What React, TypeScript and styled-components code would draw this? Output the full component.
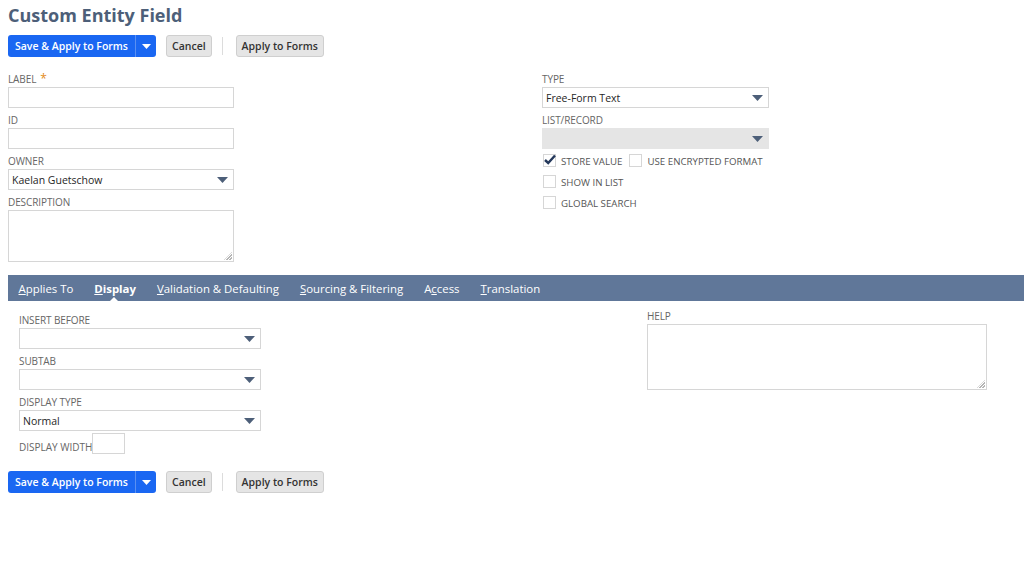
import React from 'react';
import styled, { createGlobalStyle } from 'styled-components';

const GlobalStyle = createGlobalStyle`
  html, body {
    margin: 0;
    padding: 0;
    background: #ffffff;
  }
  body {
    font-family: "Open Sans", "Liberation Sans", Arial, sans-serif;
    color: #333;
  }
`;

interface FieldProps {
  label: string;
  required?: boolean;
  children: React.ReactNode;
}

const Field: React.FC<FieldProps> = ({ label, required, children }) => (
  <FieldBlock>
    <FieldLabel>
      {label}
      {required && <Star>*</Star>}
    </FieldLabel>
    {children}
  </FieldBlock>
);

const Caret = () => (
  <svg width="11" height="6" viewBox="0 0 11 6">
    <path d="M0 0 L11 0 L5.5 6 Z" fill="#4d5f79" />
  </svg>
);

const SelectBox: React.FC<{ value?: string; width: number; disabled?: boolean }> = ({
  value,
  width,
  disabled,
}) => (
  <Select width={width} disabled={disabled}>
    <span>{value}</span>
    <Caret />
  </Select>
);

const CheckItem: React.FC<{ label: string; checked?: boolean }> = ({ label, checked }) => (
  <CheckLabel>
    <Box>
      {checked && (
        <svg width="12" height="11" viewBox="0 0 12 11">
          <path d="M1 6 L4.2 9 L11 1.5" stroke="#24385b" strokeWidth="2.4" fill="none" />
        </svg>
      )}
    </Box>
    {label}
  </CheckLabel>
);

const Actions = () => (
  <ButtonRow>
    <SplitButton>
      <PrimaryButton>Save &amp; Apply to Forms</PrimaryButton>
      <ArrowButton>
        <svg width="9" height="5" viewBox="0 0 9 5">
          <path d="M0 0 L9 0 L4.5 5 Z" fill="#ffffff" />
        </svg>
      </ArrowButton>
    </SplitButton>
    <GrayButton>Cancel</GrayButton>
    <Divider />
    <GrayButton>Apply to Forms</GrayButton>
  </ButtonRow>
);

const tabs = [
  { pre: '', key: 'A', post: 'pplies To' },
  { pre: '', key: 'D', post: 'isplay', active: true },
  { pre: '', key: 'V', post: 'alidation & Defaulting' },
  { pre: '', key: 'S', post: 'ourcing & Filtering' },
  { pre: 'A', key: 'c', post: 'cess' },
  { pre: '', key: 'T', post: 'ranslation' },
];

const App: React.FC = () => (
  <>
    <GlobalStyle />
    <Page>
      <Title>Custom Entity Field</Title>
      <Actions />

      <MainForm>
        <Column>
          <Field label="LABEL" required>
            <TextInput width={226} />
          </Field>
          <Field label="ID">
            <TextInput width={226} />
          </Field>
          <Field label="OWNER">
            <SelectBox value="Kaelan Guetschow" width={226} />
          </Field>
          <Field label="DESCRIPTION">
            <TextArea width={226} height={52}>
              <Grip />
            </TextArea>
          </Field>
        </Column>
        <Column>
          <Field label="TYPE">
            <SelectBox value="Free-Form Text" width={227} />
          </Field>
          <Field label="LIST/RECORD">
            <SelectBox width={227} disabled />
          </Field>
          <Checks>
            <CheckRow>
              <CheckItem label="STORE VALUE" checked />
              <CheckItem label="USE ENCRYPTED FORMAT" />
            </CheckRow>
            <CheckItem label="SHOW IN LIST" />
            <CheckItem label="GLOBAL SEARCH" />
          </Checks>
        </Column>
      </MainForm>

      <TabBar>
        {tabs.map((t) => (
          <Tab key={t.key + t.post} active={t.active}>
            {t.pre}
            <u>{t.key}</u>
            {t.post}
            {t.active && <Notch />}
          </Tab>
        ))}
      </TabBar>

      <TabBody>
        <Column>
          <Field label="INSERT BEFORE">
            <SelectBox width={242} />
          </Field>
          <Field label="SUBTAB">
            <SelectBox width={242} />
          </Field>
          <Field label="DISPLAY TYPE">
            <SelectBox value="Normal" width={242} />
          </Field>
          <InlineField>
            <InlineLabel>DISPLAY WIDTH</InlineLabel>
            <TextInput width={33} />
          </InlineField>
        </Column>
        <HelpColumn>
          <FieldLabel>HELP</FieldLabel>
          <TextArea width={340} height={66}>
            <Grip />
          </TextArea>
        </HelpColumn>
      </TabBody>

      <BottomActions>
        <Actions />
      </BottomActions>
    </Page>
  </>
);

export default App;

const Page = styled.div`
  padding: 2px 0 0 8px;
`;

const Title = styled.h1`
  margin: 0;
  font-size: 18px;
  line-height: 26px;
  font-weight: 700;
  color: #4d5f79;
`;

const ButtonRow = styled.div`
  display: flex;
  align-items: center;
  height: 22px;
  margin-top: 7px;
`;

const SplitButton = styled.div`
  display: flex;
  height: 22px;
  border-radius: 3px;
  overflow: hidden;
  background: #1a67f2;
  margin-right: 10px;
`;

const PrimaryButton = styled.button`
  border: none;
  background: transparent;
  color: #fff;
  font-family: inherit;
  font-size: 10.5px;
  font-weight: 600;
  padding: 0;
  width: 127px;
  height: 22px;
  white-space: nowrap;
`;

const ArrowButton = styled.span`
  width: 20px;
  display: flex;
  align-items: center;
  justify-content: center;
  border-left: 1px solid #5a90f2;
`;

const GrayButton = styled.button`
  height: 22px;
  border: 1px solid #cfcfcf;
  border-radius: 3px;
  background: #e5e5e5;
  color: #333;
  font-family: inherit;
  font-size: 10.5px;
  font-weight: 600;
  padding: 0 5px;
  white-space: nowrap;
`;

const Divider = styled.span`
  width: 1px;
  height: 18px;
  background: #dcdcdc;
  margin: 0 13px 0 10px;
`;

const MainForm = styled.div`
  display: grid;
  grid-template-columns: 534px 1fr;
  margin-top: 14px;
`;

const Column = styled.div`
  display: flex;
  flex-direction: column;
`;

const FieldBlock = styled.div`
  display: flex;
  flex-direction: column;
  margin-bottom: 4px;
`;

const FieldLabel = styled.label`
  font-size: 10px;
  line-height: 16px;
  color: #666;
  letter-spacing: -0.1px;
`;

const Star = styled.span`
  color: #e38a19;
  font-size: 12px;
  margin-left: 4px;
`;

const TextInput = styled.div<{ width: number }>`
  width: ${({ width }) => width}px;
  height: 21px;
  box-sizing: border-box;
  border: 1px solid #d6d6d6;
  background: #fff;
`;

const Select = styled.div<{ width: number; disabled?: boolean }>`
  width: ${({ width }) => width}px;
  height: 21px;
  box-sizing: border-box;
  border: 1px solid ${({ disabled }) => (disabled ? '#e5e5e5' : '#d6d6d6')};
  background: ${({ disabled }) => (disabled ? '#e5e5e5' : '#fff')};
  display: flex;
  align-items: center;
  justify-content: space-between;
  padding: 0 5px 0 3px;
  font-size: 10.5px;
  color: #262626;
`;

const TextArea = styled.div<{ width: number; height: number }>`
  position: relative;
  width: ${({ width }) => width}px;
  height: ${({ height }) => height}px;
  box-sizing: border-box;
  border: 1px solid #d6d6d6;
  background: #fff;
`;

const Grip = styled.span`
  position: absolute;
  right: 1px;
  bottom: 1px;
  width: 8px;
  height: 8px;
  background: repeating-linear-gradient(
    135deg,
    transparent 0 1px,
    #b5b5b5 1px 2px
  );
  clip-path: polygon(100% 0, 100% 100%, 0 100%);
`;

const Checks = styled.div`
  display: flex;
  flex-direction: column;
  gap: 7px;
  margin-top: 1px;
`;

const CheckRow = styled.div`
  display: flex;
  gap: 6px;
`;

const CheckLabel = styled.label`
  display: flex;
  align-items: flex-end;
  font-size: 9.7px;
  color: #555;
  line-height: 12px;
  margin-left: 1px;
`;

const Box = styled.span`
  width: 13px;
  height: 13px;
  box-sizing: border-box;
  border: 1px solid #d6d6d6;
  margin-right: 5px;
  margin-bottom: 1px;
  display: flex;
  align-items: center;
  justify-content: center;
  position: relative;
  svg {
    position: absolute;
    left: 0;
    top: -1px;
  }
`;

const TabBar = styled.div`
  display: flex;
  height: 26px;
  margin-top: 9px;
  background: #607799;
`;

const Tab = styled.div<{ active?: boolean }>`
  position: relative;
  display: flex;
  align-items: center;
  padding: 0 10.5px;
  color: #fff;
  font-size: 11.4px;
  font-weight: ${({ active }) => (active ? 700 : 400)};
  white-space: pre;
`;

const Notch = styled.span`
  position: absolute;
  left: 50%;
  bottom: 0;
  margin-left: -5px;
  border-left: 4px solid transparent;
  border-right: 4px solid transparent;
  border-bottom: 4px solid #fff;
`;

const TabBody = styled.div`
  display: grid;
  grid-template-columns: 628px 1fr;
  padding: 11px 0 0 11px;
`;

const HelpColumn = styled.div`
  display: flex;
  flex-direction: column;
  margin-top: -4px;
`;

const InlineField = styled.div`
  display: flex;
  align-items: flex-end;
  margin-top: -2px;
`;

const InlineLabel = styled.span`
  font-size: 10px;
  color: #666;
  line-height: 14px;
`;

const BottomActions = styled.div`
  margin-top: 17px;
`;
